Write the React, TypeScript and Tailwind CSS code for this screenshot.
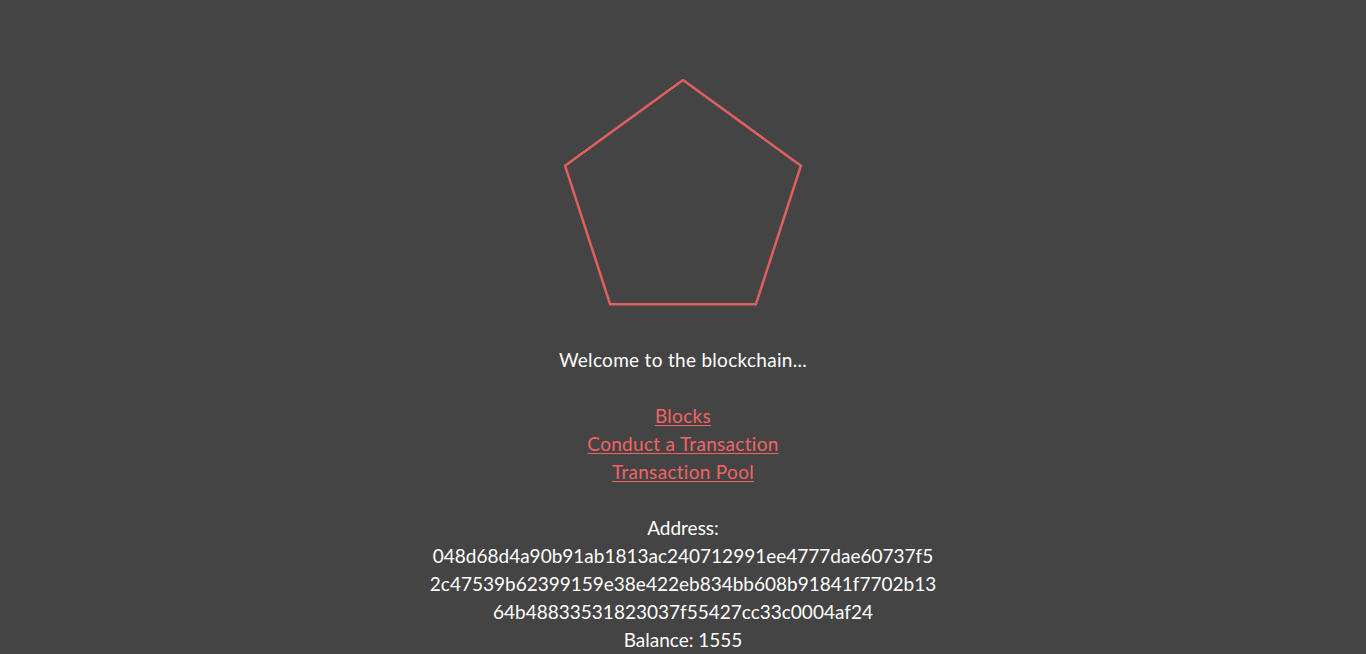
const address =
  '048d68d4a90b91ab1813ac240712991ee4777dae60737f52c47539b62399159e38e422eb834bb608b91841f7702b1364b48833531823037f55427cc33c0004af24'

function Logo() {
  // regular pentagon, r = 124, centred in a 250 box
  const pts = Array.from({ length: 5 }, (_, i) => {
    const a = (-90 + i * 72) * (Math.PI / 180)
    return `${(125 + 124 * Math.cos(a)).toFixed(1)},${(125 + 124 * Math.sin(a)).toFixed(1)}`
  }).join(' ')
  return (
    <svg width="250" height="250" viewBox="0 0 250 250" className="block">
      <polygon points={pts} fill="none" stroke="#e05f5f" strokeWidth="2.5" />
    </svg>
  )
}

export default function App() {
  return (
    <div className="min-h-screen bg-[#444444] text-white font-['Lato',sans-serif] text-[19px] leading-[28px] text-center">
      <div className="flex flex-col items-center pt-[79px]">
        <Logo />
        <div className="mt-[17px] tracking-[0.3px]">Welcome to the blockchain...</div>

        <div className="mt-[28px] flex flex-col items-center tracking-[0.3px]">
          <a href="#blocks" className="text-[#f06464] underline underline-offset-2">Blocks</a>
          <a href="#conduct" className="text-[#f06464] underline underline-offset-2">Conduct a Transaction</a>
          <a href="#pool" className="text-[#f06464] underline underline-offset-2">Transaction Pool</a>
        </div>

        <div className="mt-[28px] w-[508px]">
          <div>Address:</div>
          <div className="break-all">{address}</div>
          <div>Balance: 1555</div>
        </div>
      </div>
    </div>
  )
}
